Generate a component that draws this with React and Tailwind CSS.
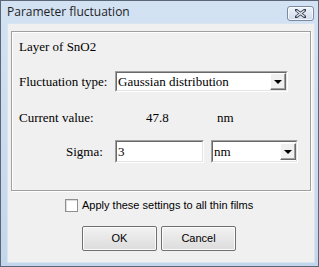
import React from 'react';

const Arrow = () => (
  <div className="w-[16px] h-[17px] bg-[#f0f0f0] border border-t-white border-l-white border-r-[#696969] border-b-[#696969] shadow-[inset_-1px_-1px_0_#a0a0a0] flex items-center justify-center">
    <div className="w-0 h-0 border-l-[4px] border-r-[4px] border-t-[4px] border-l-transparent border-r-transparent border-t-black" />
  </div>
);

const Sunken = ({ className, children }) => (
  <div className={`border border-t-[#a0a0a0] border-l-[#a0a0a0] border-r-white border-b-white ${className}`}>
    <div className="h-full border border-t-[#696969] border-l-[#696969] border-r-[#e3e3e3] border-b-[#e3e3e3] bg-white flex items-center">
      {children}
    </div>
  </div>
);

const Select = ({ className, value }) => (
  <Sunken className={className}>
    <span className="flex-1 pl-[1px] text-[13px] leading-none text-black">{value}</span>
    <Arrow />
  </Sunken>
);

export default function App() {
  return (
    <div className="w-[319px] h-[267px] border border-[#5b6676] bg-gradient-to-b from-[#d3e2f3] to-[#c4d6ec] flex flex-col">
      {/* title bar */}
      <div className="h-[22px] flex items-center justify-between pl-[6px] pr-[4px]">
        <span className="text-[12px] text-[#1e1e1e] font-['Open_Sans',sans-serif]">
          Parameter fluctuation
        </span>
        <div className="w-[27px] h-[15px] mt-[3px] rounded-[3px] border border-[#7a8aa3] bg-gradient-to-b from-[#eef3fa] to-[#d0dcec] flex items-center justify-center shadow-[inset_0_0_0_1px_rgba(255,255,255,0.7)]">
          <svg width="11" height="9" viewBox="0 0 11 9">
            <path d="M1 1 L10 8 M10 1 L1 8" stroke="#3b4452" strokeWidth="3" strokeLinecap="square" />
            <path d="M1.5 1.5 L9.5 7.5 M9.5 1.5 L1.5 7.5" stroke="#e9edf2" strokeWidth="1.3" />
          </svg>
        </div>
      </div>

      {/* client area */}
      <div className="flex-1 ml-[6px] mr-[3px] mb-[3px] bg-[#f0f0f0] border border-[#d9e4f1] flex flex-col px-[3px] pt-[7px]">
        <div className="h-[160px] border border-[#a0a0a0] shadow-[1px_1px_0_#fff,inset_1px_1px_0_#fff] flex flex-col pl-[7px] pt-[7px] text-[13px] text-black font-['Liberation_Serif','Times_New_Roman',serif]">
          <div className="h-[16px] flex items-center">Layer of SnO2</div>

          <div className="mt-[16px] h-[21px] flex items-center">
            <span className="w-[96px]">Fluctuation type:</span>
            <Select className="w-[173px] h-[21px]" value="Gaussian distribution" />
          </div>

          <div className="mt-[18px] h-[16px] flex items-center">
            <span className="w-[127px]">Current value:</span>
            <span className="w-[71px]">47.8</span>
            <span>nm</span>
          </div>

          <div className="mt-[14px] h-[23px] flex items-center">
            <span className="w-[96px] pl-[47px]">Sigma:</span>
            <Sunken className="w-[89px] h-[23px]">
              <span className="pl-[1px] text-[13px]">3</span>
            </Sunken>
            <Select className="ml-[7px] w-[87px] h-[23px]" value="nm" />
          </div>
        </div>

        <div className="mt-[8px] h-[13px] flex items-center pl-[54px] text-[11px] text-black font-['Liberation_Sans',sans-serif]">
          <div className="w-[13px] h-[13px] border border-[#8f8f8f] bg-white shadow-[inset_1px_1px_0_#dcdcdc]" />
          <span className="ml-[4px]">Apply these settings to all thin films</span>
        </div>

        <div className="mt-[14px] flex gap-[4px] pl-[71px] text-[11px] text-black font-['Liberation_Sans',sans-serif]">
          <button className="w-[75px] h-[25px] rounded-[2px] border border-[#707070] bg-gradient-to-b from-[#f2f2f2] to-[#dcdcdc] shadow-[inset_0_0_0_1px_#fbfbfb]">OK</button>
          <button className="w-[75px] h-[25px] rounded-[2px] border border-[#707070] bg-gradient-to-b from-[#f2f2f2] to-[#dcdcdc] shadow-[inset_0_0_0_1px_#fbfbfb]">Cancel</button>
        </div>
      </div>
    </div>
  );
}
